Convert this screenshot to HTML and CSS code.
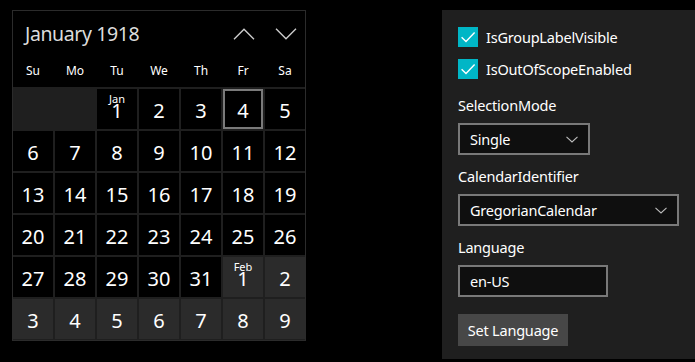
FILE: index.html
```html
<!DOCTYPE html>
<html lang="en">
<head>
    <meta charset="UTF-8">
    <title>CalendarView</title>
    <link rel="stylesheet" href="styles.css">
</head>
<body>
    <div class="page">
        <!-- Calendar -->
        <div class="calendar">
            <div class="cal-head">
                <div class="title-row">
                    <span class="month">January 1918</span>
                    <div class="nav">
                        <button class="nav-btn" aria-label="Previous">
                            <svg width="22" height="12" viewBox="0 0 22 12"><path d="M1 11.2 L11 1.2 L21 11.2" /></svg>
                        </button>
                        <button class="nav-btn" aria-label="Next">
                            <svg width="22" height="12" viewBox="0 0 22 12"><path d="M1 0.8 L11 10.8 L21 0.8" /></svg>
                        </button>
                    </div>
                </div>
                <div class="weekdays">
                    <span>Su</span><span>Mo</span><span>Tu</span><span>We</span><span>Th</span><span>Fr</span><span>Sa</span>
                </div>
            </div>
            <div class="days">
                <div class="day blank"></div>
                <div class="day blank"></div>
                <div class="day"><span class="group">Jan</span>1</div>
                <div class="day">2</div>
                <div class="day">3</div>
                <div class="day today">4</div>
                <div class="day">5</div>
                <div class="day">6</div>
                <div class="day">7</div>
                <div class="day">8</div>
                <div class="day">9</div>
                <div class="day">10</div>
                <div class="day">11</div>
                <div class="day">12</div>
                <div class="day">13</div>
                <div class="day">14</div>
                <div class="day">15</div>
                <div class="day">16</div>
                <div class="day">17</div>
                <div class="day">18</div>
                <div class="day">19</div>
                <div class="day">20</div>
                <div class="day">21</div>
                <div class="day">22</div>
                <div class="day">23</div>
                <div class="day">24</div>
                <div class="day">25</div>
                <div class="day">26</div>
                <div class="day">27</div>
                <div class="day">28</div>
                <div class="day">29</div>
                <div class="day">30</div>
                <div class="day">31</div>
                <div class="day out"><span class="group">Feb</span>1</div>
                <div class="day out">2</div>
                <div class="day out">3</div>
                <div class="day out">4</div>
                <div class="day out">5</div>
                <div class="day out">6</div>
                <div class="day out">7</div>
                <div class="day out">8</div>
                <div class="day out">9</div>
            </div>
        </div>

        <!-- Options -->
        <div class="panel">
            <label class="check-row">
                <span class="check">
                    <svg width="20" height="20" viewBox="0 0 20 20"><path d="M3.6 10.2 L8 14.4 L16.6 5.6" /></svg>
                </span>
                IsGroupLabelVisible
            </label>
            <label class="check-row second">
                <span class="check">
                    <svg width="20" height="20" viewBox="0 0 20 20"><path d="M3.6 10.2 L8 14.4 L16.6 5.6" /></svg>
                </span>
                IsOutOfScopeEnabled
            </label>

            <div class="field-label first">SelectionMode</div>
            <div class="combo combo-small">
                <span>Single</span>
                <svg width="12" height="7" viewBox="0 0 12 7"><path d="M0.5 0.8 L6 6 L11.5 0.8" /></svg>
            </div>

            <div class="field-label">CalendarIdentifier</div>
            <div class="combo combo-wide">
                <span>GregorianCalendar</span>
                <svg width="12" height="7" viewBox="0 0 12 7"><path d="M0.5 0.8 L6 6 L11.5 0.8" /></svg>
            </div>

            <div class="field-label">Language</div>
            <div class="textbox">en-US</div>

            <button class="action-button">Set Language</button>
        </div>
    </div>
</body>
</html>
```

FILE: styles.css
```css
/* Base */
body, html {
    margin: 0;
    padding: 0;
    background: #000;
    color: #fff;
    font-family: 'Noto Sans', 'Open Sans', sans-serif;
    overflow: hidden;
}

.page {
    display: flex;
    justify-content: space-between;
    align-items: flex-start;
    padding: 10px 0 0 12px;
    width: 695px;
    box-sizing: border-box;
}

/* Calendar */
.calendar {
    border: 1px solid #2b2b2b;
    background: #000;
}

.cal-head {
    height: 77px;
    display: flex;
    flex-direction: column;
}

.title-row {
    height: 44px;
    display: flex;
    align-items: center;
    justify-content: space-between;
    padding: 0 8px 0 12px;
}

.month {
    font-size: 19.5px;
    color: #dcdcdc;
    letter-spacing: -0.4px;
}

.nav {
    display: flex;
    gap: 20px;
    margin-top: 1px;
}

.nav-btn {
    background: none;
    border: none;
    padding: 0;
    width: 22px;
    height: 12px;
    display: flex;
}

.nav-btn path {
    fill: none;
    stroke: #cfcfcf;
    stroke-width: 1.3;
}

.weekdays {
    flex: 1;
    display: grid;
    grid-template-columns: repeat(7, 40px);
    column-gap: 2px;
    align-items: center;
    font-size: 12px;
    text-align: center;
    padding-bottom: 3px;
}

.days {
    display: grid;
    grid-template-columns: repeat(7, 40px);
    grid-auto-rows: 40px;
    gap: 2px;
    padding: 1px 0;
    background: #1f1f1f;
    border-top: 1px solid #1f1f1f;
    margin-top: -1px;
}

.day {
    position: relative;
    background: #000;
    display: flex;
    align-items: center;
    justify-content: center;
    font-size: 20px;
    padding-top: 2px;
    box-sizing: border-box;
}

.day.blank {
    background: #1f1f1f;
}

.day.out {
    background: #2b2b2b;
}

.day.today {
    box-shadow: inset 0 0 0 2px #7a7a7a;
}

.group {
    position: absolute;
    top: 3px;
    left: 0;
    right: 0;
    text-align: center;
    font-size: 11px;
    line-height: 14px;
}

/* Options panel */
.panel {
    width: 253px;
    height: 349px;
    box-sizing: border-box;
    background: #1f1f1f;
    padding: 17px 16px 0 16px;
    display: flex;
    flex-direction: column;
    align-items: flex-start;
    font-size: 14.5px;
    letter-spacing: -0.2px;
}

.check-row {
    display: flex;
    align-items: center;
    gap: 8px;
    height: 20px;
}

.check-row.second {
    margin-top: 12px;
}

.check {
    width: 20px;
    height: 20px;
    background: #00b6c6;
    display: flex;
}

.check path {
    fill: none;
    stroke: #fff;
    stroke-width: 1.4;
}

.field-label {
    margin-top: 11px;
    height: 20px;
    line-height: 20px;
}

.field-label.first {
    margin-top: 16px;
}

.combo, .textbox {
    margin-top: 8px;
    height: 32px;
    box-sizing: border-box;
    border: 2px solid #797979;
    background: #0f0f0f;
    display: flex;
    align-items: center;
    justify-content: space-between;
    padding: 0 10px 0 10px;
}

.combo path {
    fill: none;
    stroke: #bdbdbd;
    stroke-width: 1.1;
}

.combo-small {
    width: 132px;
}

.combo-wide {
    width: 221px;
}

.textbox {
    width: 150px;
}

.action-button {
    margin-top: 17px;
    height: 32px;
    width: 110px;
    border: none;
    background: #474747;
    color: #fff;
    font-family: inherit;
    font-size: 14.5px;
    letter-spacing: -0.2px;
    padding: 0;
}
```
